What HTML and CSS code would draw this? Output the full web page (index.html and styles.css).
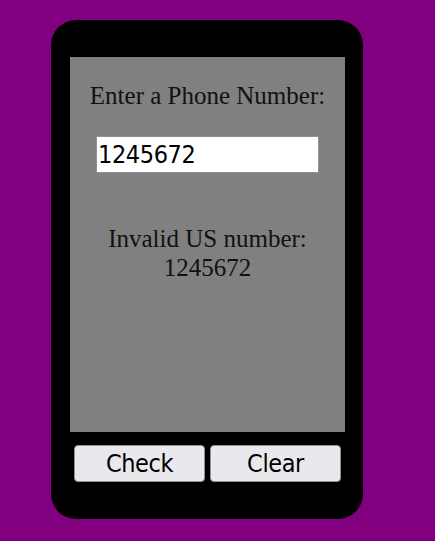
FILE: index.html
```html
<!DOCTYPE html>
<html>
<head>
<meta charset="utf-8">
<link rel="stylesheet" href="styles.css">
</head>
<body>
<div class="phone">
  <div class="screen">
    <div class="title">Enter a Phone Number:</div>
    <input class="number" type="text" value="1245672">
    <div class="result">Invalid US number:<br>1245672</div>
  </div>
  <div class="buttons">
    <button class="btn">Check</button>
    <button class="btn">Clear</button>
  </div>
</div>
</body>
</html>
```
FILE: styles.css
```css
html, body {
  margin: 0;
  padding: 0;
  background: #800080;
}
body {
  width: 435px;
  height: 541px;
  overflow: hidden;
}
.phone {
  box-sizing: border-box;
  width: 312px;
  height: 499px;
  margin: 20px 0 0 51px;
  padding: 37px 18px 37px 19px;
  background: #000;
  border-radius: 25px;
  display: flex;
  flex-direction: column;
}
.screen {
  height: 375px;
  background: #808080;
  display: flex;
  flex-direction: column;
  align-items: center;
  padding-top: 25px;
  box-sizing: border-box;
  font-family: "Liberation Serif", serif;
  font-size: 25px;
  color: #111;
}
.title {
  line-height: 27px;
}
.number {
  box-sizing: border-box;
  width: 223px;
  height: 37px;
  margin: 27px 0 0 0;
  padding: 0 1px;
  border: 1px solid #8f8f9d;
  background: #fff;
  font-family: "DejaVu Sans Condensed", "DejaVu Sans", sans-serif;
  font-size: 25px;
  letter-spacing: -0.4px;
  color: #000;
  outline: none;
}
.result {
  margin-top: 51px;
  line-height: 29px;
  text-align: center;
}
.buttons {
  display: flex;
  gap: 5px;
  padding: 0 4px;
  margin-top: 13px;
}
.btn {
  flex: 1;
  height: 37px;
  box-sizing: border-box;
  background: #e9e9ed;
  border: 1px solid #8f8f9d;
  border-radius: 4px;
  font-family: "DejaVu Sans Condensed", "DejaVu Sans", sans-serif;
  font-size: 25px;
  letter-spacing: -0.4px;
  color: #000;
  padding: 0;
}
```
